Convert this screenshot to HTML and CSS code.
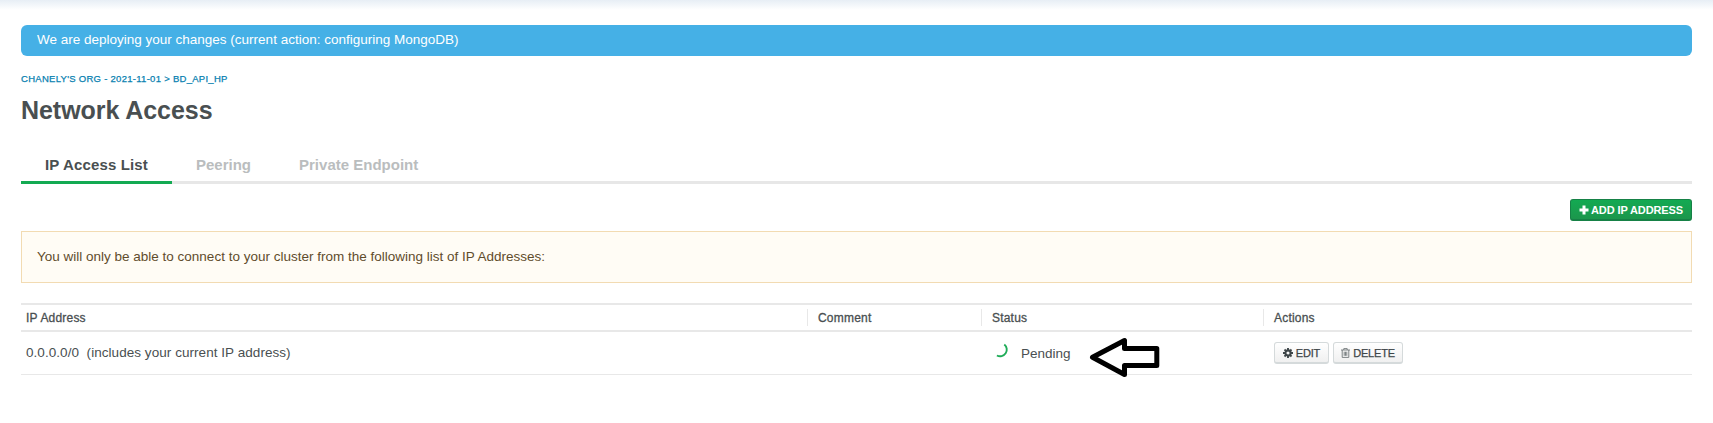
FILE: index.html
```html
<!DOCTYPE html>
<html lang="en">
<head>
<meta charset="utf-8">
<title>Network Access</title>
<link rel="stylesheet" href="styles.css">
</head>
<body>
<main class="page">
  <div class="banner">We are deploying your changes (current action: configuring MongoDB)</div>
  <nav class="crumbs">CHANELY'S ORG - 2021-11-01 &gt; BD_API_HP</nav>
  <h1 class="title">Network Access</h1>
  <div class="tabs">
    <a class="tab tab-active">IP Access List</a>
    <a class="tab">Peering</a>
    <a class="tab">Private Endpoint</a>
  </div>
  <div class="toolbar">
    <button class="btn btn-primary"><svg class="plus" viewBox="0 0 10 10"><path d="M3.500 0.500h3v3h3v3h-3v3h-3v-3h-3v-3h3z" fill="#fff"/></svg>ADD IP ADDRESS</button>
  </div>
  <div class="notice">You will only be able to connect to your cluster from the following list of IP Addresses:</div>
  <div class="grid head">
    <div class="th">IP Address</div>
    <div class="th th-line">Comment</div>
    <div class="th th-line">Status</div>
    <div class="th th-line">Actions</div>
  </div>
  <div class="grid row">
    <div class="td address">0.0.0.0/0 &nbsp;(includes your current IP address)</div>
    <div class="td"></div>
    <div class="td status">
      <svg class="spinner" viewBox="0 0 16 16"><path d="M10.300 1.400A6.700 6.700 0 0 1 2.900 12.500" fill="none" stroke="#1fac58" stroke-width="1.900"/></svg>
      <span class="pending">Pending</span>
    </div>
    <div class="td actions">
      <button class="btn btn-edit"><svg class="gear" viewBox="0 0 10 10"><circle cx="5" cy="5" r="2.600" fill="none" stroke="#3d4548" stroke-width="2.100"/><path d="M5 0v2M5 8v2M0 5h2M8 5h2M1.500 1.500l1.300 1.300M7.200 7.200l1.300 1.300M1.500 8.500l1.300-1.300M7.200 2.800l1.300-1.300" stroke="#3d4548" stroke-width="1.900"/></svg>EDIT</button>
      <button class="btn btn-delete"><svg class="trash" viewBox="0 0 9 10"><path d="M0 2h9M2.800 2V.6h3.400V2M1.200 2v7.400h6.600V2M3.200 3.700v4.100M4.500 3.700v4.100M5.800 3.700v4.100" fill="none" stroke="#6f7678" stroke-width=".9"/></svg>DELETE</button>
    </div>
    <svg class="arrow" viewBox="0 0 90 50"><path d="M12.500 27.300L44.500 10.500V18.400H76.800V35.400H44.500V44.500z" fill="#fff" stroke="#000" stroke-width="5" stroke-linejoin="round"/></svg>
  </div>
</main>
</body>
</html>
```
FILE: styles.css
```css
* { box-sizing: border-box; }
body {
  min-height: 423px;
  margin: 0;
  background: linear-gradient(#e7eef5, #fff 10px) no-repeat #fff;
  color: #494f51;
  font-family: "Liberation Sans", Arial, sans-serif;
  font-size: 13.5px;
  white-space: nowrap;
}
.page { min-height: 423px; padding: 25px 21px 0; }
.banner {
  height: 31px;
  padding: 0 16px;
  border-radius: 6px;
  background: #45b0e6;
  color: #fff;
  line-height: 30px;
}
.crumbs {
  margin-top: 16px;
  color: #077fb0;
  font-size: 9.5px;
  letter-spacing: 0.28px;
  line-height: 14px;
  -webkit-text-stroke: 0.25px;
}
.title {
  margin: 6px 0 0;
  font-size: 25px;
  letter-spacing: -0.05px;
  line-height: 36px;
}
.tabs {
  display: flex;
  height: 49px;
  margin-top: 7px;
  border-bottom: 3px solid #e7e7e7;
}
.tab {
  height: 49px;
  padding: 20px 24px 0;
  color: #babdbe;
  font-size: 15px;
  font-weight: bold;
  line-height: 20px;
}
.tab-active { border-bottom: 3px solid #13aa52; color: #494f51; letter-spacing: 0.15px; }
.toolbar { display: flex; justify-content: flex-end; margin-top: 15px; }
.btn {
  display: flex;
  align-items: center;
  justify-content: center;
  height: 22px;
  padding: 0;
  border: 1px solid #d5dadb;
  border-bottom-width: 2px;
  border-radius: 3px;
  background: linear-gradient(#fff, #f0f0f0);
  color: #3d4548;
  font-family: inherit;
  font-size: 11px;
  letter-spacing: -0.2px;
  -webkit-text-stroke: 0.25px;
}
.btn-primary {
  width: 122px;
  border-color: #168146;
  background: linear-gradient(#13aa52, #1c964c);
  color: #fff;
  font-weight: bold;
  letter-spacing: -0.1px;
  -webkit-text-stroke: 0;
}
.btn-edit { width: 55px; }
.btn-delete { width: 70px; }
.plus { width: 10px; height: 10px; margin-right: 2px; }
.notice {
  height: 52px;
  margin-top: 10px;
  padding: 0 15px;
  border: 1px solid #f2dbb2;
  background: #fffcf5;
  color: #5f4c2c;
  line-height: 50px;
}
.grid { display: grid; grid-template-columns: 786px 174px 282px 1fr; align-items: center; }
.head { height: 29px; margin-top: 20px; border: solid #e8e8e8; border-width: 2px 0; }
.th { height: 17px; padding-left: 5px; font-size: 12px; letter-spacing: 0.2px; line-height: 19px; -webkit-text-stroke: 0.3px; }
.th-line { padding-left: 10px; border-left: 1px solid #e8e8e8; }
.row { position: relative; height: 43px; border-bottom: 1px solid #e8e8e8; }
.td { padding-left: 5px; }
.address { padding-bottom: 2px; letter-spacing: 0.05px; }
.status { display: flex; align-items: center; padding-left: 12px; }
.spinner { width: 16px; height: 16px; margin: -4px 0 0 1px; }
.pending { margin-left: 11px; }
/* Hand-drawn pointer lying over the table row */
.arrow { position: absolute; left: 1059px; top: -2px; width: 90px; height: 50px; overflow: visible; }
.actions { display: flex; gap: 4px; padding-left: 11px; }
.gear { width: 10px; height: 10px; margin-right: 3px; }
.trash { width: 9px; height: 10px; margin-right: 3px; }
```
